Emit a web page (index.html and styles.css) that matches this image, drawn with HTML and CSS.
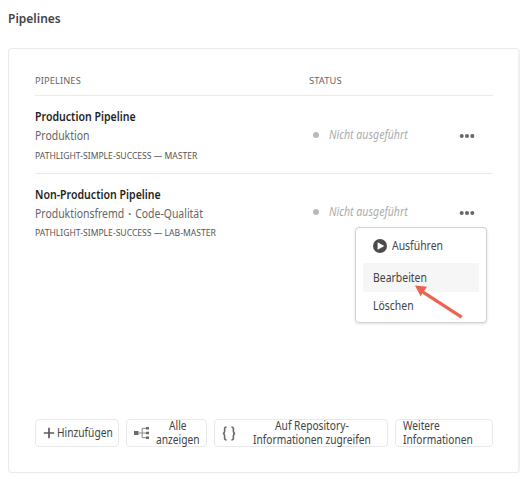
FILE: index.html
```
<!DOCTYPE html>
<html lang="de">
<head>
<meta charset="utf-8">
<title>Pipelines</title>
<link rel="stylesheet" href="styles.css">
</head>
<body>
<main class="page">
  <h1 class="title"><span class="narrow wide">Pipelines</span></h1>
  <section class="card">
    <div class="grid head">
      <div>PIPELINES</div>
      <div>STATUS</div>
    </div>
    <div class="grid row">
      <div class="info">
        <h2><span class="narrow">Production Pipeline</span></h2>
        <p class="kind"><span class="narrow">Produktion</span></p>
        <p class="repo"><span class="narrow">PATHLIGHT-SIMPLE-SUCCESS — MASTER</span></p>
      </div>
      <div class="status"><i class="dot"></i><em class="narrow">Nicht ausgeführt</em></div>
      <div class="more">
        <svg width="16" height="6" viewBox="0 0 16 6"><circle cx="2.7" cy="3" r="2"/><circle cx="8" cy="3" r="2"/><circle cx="13.3" cy="3" r="2"/></svg>
      </div>
    </div>
    <div class="grid row last">
      <div class="info">
        <h2><span class="narrow">Non-Production Pipeline</span></h2>
        <p class="kind"><span class="narrow">Produktionsfremd <b>·</b> Code-Qualität</span></p>
        <p class="repo"><span class="narrow">PATHLIGHT-SIMPLE-SUCCESS — LAB-MASTER</span></p>
      </div>
      <div class="status"><i class="dot"></i><em class="narrow">Nicht ausgeführt</em></div>
      <div class="more">
        <svg width="16" height="6" viewBox="0 0 16 6"><circle cx="2.7" cy="3" r="2"/><circle cx="8" cy="3" r="2"/><circle cx="13.3" cy="3" r="2"/></svg>
        <div class="menu">
          <div class="item run">
            <svg width="14" height="14" viewBox="0 0 14 14"><circle cx="7" cy="7" r="7" fill="#4b4b4b"/><path d="M4.6 3.2v7.6L11.3 7z" fill="#fff"/></svg>
            <span class="narrow">Ausführen</span>
          </div>
          <div class="item active"><span class="narrow">Bearbeiten</span></div>
          <div class="item"><span class="narrow">Löschen</span></div>
          <svg class="pointer" width="52" height="38" viewBox="0 0 52 38"><path d="M48 32.5L10 8" stroke="#d9402f" stroke-width="3.4" opacity=".35" fill="none"/><path d="M47.5 32L9 7" stroke="#ec6351" stroke-width="3" fill="none"/><path d="M1 .5l12 1.2-6.4 9.6z" fill="#ec6351"/></svg>
        </div>
      </div>
    </div>
    <div class="actions">
      <button class="add">
        <svg width="12" height="12" viewBox="0 0 12 12"><path d="M6 .8v10.4M.8 6h10.4" stroke="#5c5c5c" stroke-width="1.7"/></svg>
        <span class="narrow">Hinzufügen</span>
      </button>
      <button class="all">
        <svg width="16" height="12" viewBox="0 0 16 12"><path d="M0 4h4.5v4H0zM12 0h3v2.6h-3zM12 4.7h3v2.6h-3zM12 9.4h3V12h-3z" fill="#6b6b6b"/><path d="M4.5 6H12M12 1.3H8.2v9.4H12" fill="none" stroke="#888" stroke-width="1"/></svg>
        <span class="narrow">Alle<br>anzeigen</span>
      </button>
      <button class="code">
        <svg width="14" height="15" viewBox="0 0 14 15"><path d="M4.6 1C2.8 1 2.6 1.7 2.6 3v2.5C2.6 6.7 2.1 7.3.9 7.5c1.2.2 1.7.8 1.7 2V12c0 1.3.2 2 2 2M9.4 1c1.8 0 2 .7 2 2v2.5c0 1.2.5 1.8 1.7 2-1.2.2-1.7.8-1.7 2V12c0 1.3-.2 2-2 2" fill="none" stroke="#6b6b6b" stroke-width="1.6"/></svg>
        <span class="narrow">Auf Repository-<br>Informationen zugreifen</span>
      </button>
      <button class="learn"><span class="narrow">Weitere<br>Informationen</span></button>
    </div>
  </section>
</main>
</body>
</html>
```
FILE: styles.css
```
* { box-sizing: border-box; }
body {
  margin: 0;
  background: #fff;
  color: #434343;
  font: 12px/16px "Noto Sans", sans-serif;
}
h1, h2, p { margin: 0; }
svg { display: block; flex: none; }
.page { padding: 10px 7px 0 8px; }

/* Condensed lettering */
.narrow {
  display: inline-block;
  transform: scaleX(.87);
  transform-origin: left center;
  white-space: nowrap;
}
.title .wide { transform: scaleX(.925); }

.title { font-size: 13px; font-weight: 600; line-height: 16px; height: 38px; color: #444; }
.card {
  width: 512px;
  height: 425px;
  padding: 24px 25px 25px 26px;
  border: 1px solid #eaeaea;
  border-right: 2px solid #f0f0f0;
  border-radius: 4px;
  display: flex;
  flex-direction: column;
}
.grid {
  display: grid;
  grid-template-columns: 274px 1fr 54px;
  border-bottom: 1px solid #eaeaea;
}
.head { height: 23px; font-size: 9.3px; line-height: 16px; color: #666; letter-spacing: .1px; }
.row { height: 78px; padding-top: 11px; }
.last { border-bottom: 0; }
h2 { font-size: 12px; font-weight: 600; line-height: 19px; color: #1f1f1f; }
h2 .narrow { transform: scaleX(.882); }
.kind { line-height: 19px; color: #666; }
.kind b { margin: 0 1.5px; }
.repo { font-size: 9px; line-height: 22px; color: #555; }
.last .repo { line-height: 20px; }
.repo .narrow { transform: scaleX(.954); }
.status { display: flex; align-items: center; height: 16px; margin-top: 20px; padding-left: 4px; color: #ababab; }
.status .narrow { transform: scaleX(.88); }
.dot { width: 6px; height: 6px; margin-right: 10px; border-radius: 50%; background: #b9b9b9; }
.more { position: relative; padding: 26px 0 0 20px; fill: #666; }
.last .more { padding-top: 25px; }
.last .status { margin-top: 19px; }

.menu {
  position: absolute;
  top: 42px;
  right: 6px;
  width: 132px;
  height: 96px;
  padding: 6px 7px;
  background: #fff;
  border: 1px solid #d2d2d2;
  border-radius: 4px;
  box-shadow: 0 1px 3px rgba(0, 0, 0, .13);
}
.item { display: flex; align-items: center; height: 27px; padding-left: 10px; }
.run { gap: 5px; height: 29px; padding-bottom: 5px; }
.active { height: 29px; background: #f6f6f6; }
.pointer { position: absolute; left: 58px; top: 57px; }

.actions { display: flex; gap: 7px; margin-top: auto; }
button {
  flex: none;
  display: flex;
  align-items: center;
  height: 28px;
  padding: 0 7px;
  background: #fff;
  border: 1px solid #e9e9e9;
  border-radius: 4px;
  color: #434343;
  font: 12px/14px "Noto Sans", sans-serif;
}
button .narrow { transform: scaleX(.85); }
.add { width: 84px; gap: 2px; }
.all { width: 81px; gap: 6px; }
.all .narrow, .code .narrow { text-align: center; }
.code { width: 174px; gap: 17px; }
.learn { width: 98px; padding-left: 7px; text-align: left; }
```
